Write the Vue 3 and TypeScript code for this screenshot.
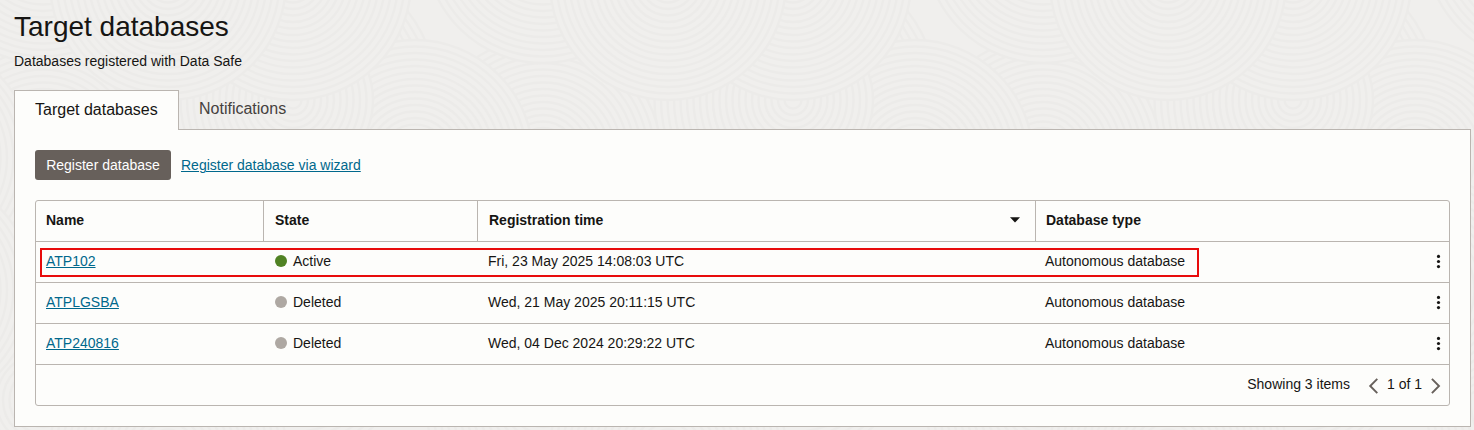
<script setup lang="ts">
interface Row { name: string; state: string; time: string; type: string }
interface Disc { x: number; y: number; r: number }

const rows: Row[] = [
  { name: 'ATP102', state: 'Active', time: 'Fri, 23 May 2025 14:08:03 UTC', type: 'Autonomous database' },
  { name: 'ATPLGSBA', state: 'Deleted', time: 'Wed, 21 May 2025 20:11:15 UTC', type: 'Autonomous database' },
  { name: 'ATP240816', state: 'Deleted', time: 'Wed, 04 Dec 2024 20:29:22 UTC', type: 'Autonomous database' },
]

// Overlapping ringed discs, painted back to front, repeating every 500px.
const base: Disc[] = [
  { x: 293, y: 100, r: 145 },
  { x: 43, y: 155, r: 118 },
  { x: -85, y: 158, r: 118 },
  { x: 293, y: 100, r: 80 },
  { x: 293, y: -18, r: 118 },
  { x: 43, y: -55, r: 118 },
  { x: 168, y: -18, r: 118 },
  { x: 43, y: 400, r: 118 },
  { x: 293, y: 340, r: 118 },
  { x: -85, y: 290, r: 118 },
  { x: 168, y: 450, r: 118 },
]
const discs: Disc[] = base.flatMap(d => [0, 500, 1000, 1500].map(s => ({ ...d, x: d.x + s })))
const radii = (r: number): number[] => {
  const out: number[] = []
  for (let v = r; v > 2; v -= 6.5) out.push(v)
  return out
}
</script>

<template>
  <div class="page">
    <svg class="texture" width="1474" height="430" aria-hidden="true">
      <g v-for="(d, i) in discs" :key="i">
        <circle :cx="d.x" :cy="d.y" :r="d.r" fill="#f0efed" />
        <circle v-for="r in radii(d.r)" :key="r" :cx="d.x" :cy="d.y" :r="r" fill="none" stroke="#ecebe9" stroke-width="2.4" />
      </g>
    </svg>
    <main class="content">
      <h1>Target databases</h1>
      <p class="subtitle">Databases registered with Data Safe</p>
      <nav class="tabs">
        <a class="tab active">Target databases</a>
        <a class="tab">Notifications</a>
      </nav>
      <section class="panel">
        <div class="actions">
          <button type="button">Register database</button>
          <a class="link">Register database via wizard</a>
        </div>
        <div class="table">
          <div class="row head">
            <div class="cell">Name</div>
            <div class="cell">State</div>
            <div class="cell sorted">Registration time
              <svg width="10" height="6" viewBox="0 0 10 6"><path d="M0 .3h10L5 5.5z" fill="#161513" /></svg>
            </div>
            <div class="cell">Database type</div>
          </div>
          <div v-for="(row, i) in rows" :key="row.name" class="row">
            <div class="cell"><a class="link">{{ row.name }}</a></div>
            <div class="cell"><i class="dot" :class="{ on: row.state === 'Active' }"></i>{{ row.state }}</div>
            <div class="cell">{{ row.time }}</div>
            <div class="cell last">{{ row.type }}
              <svg width="5" height="15" viewBox="0 0 5 15" fill="#161513"><circle cx="2.5" cy="2.4" r="1.6" /><circle cx="2.5" cy="7.5" r="1.6" /><circle cx="2.5" cy="12.6" r="1.6" /></svg>
            </div>
            <span v-if="i === 0" class="highlight"></span>
          </div>
          <div class="footer">
            <span class="count">Showing 3 items</span>
            <svg class="chev" width="10" height="16" viewBox="0 0 10 16"><path d="M9.3 .8 2.2 8 9.3 15.2" /></svg>
            <span class="pages">1 of 1</span>
            <svg class="chev" width="10" height="16" viewBox="0 0 10 16"><path d="M.9 .8 8 8 .9 15.2" /></svg>
          </div>
        </div>
      </section>
    </main>
  </div>
</template>

<style>
body { margin: 0; background: #f0efed; }
</style>
<style scoped>
.page { position: relative; width: 1474px; height: 430px; overflow: hidden; background: #f0efed; color: #161513; font: 14px/20px "Liberation Sans", Arial, sans-serif; }
.texture { position: absolute; inset: 0; }
.content { position: relative; padding: 9px 3px 0 14px; }
h1 { margin: 0; font-size: 28px; line-height: 36px; font-weight: 400; }
.subtitle { margin: 6px 0 0; }
.tabs { display: flex; height: 39px; margin-top: 19px; }
.tab { box-sizing: border-box; height: 38px; padding: 9px 20px 0; font-size: 16px; line-height: 20px; color: #45413e; }
.tab.active { position: relative; z-index: 1; width: 165px; height: 40px; border: 1px solid #bab5b0; border-bottom: 0; background: #fdfdfb; color: #161513; white-space: nowrap; }
.panel { box-sizing: border-box; height: 298px; padding: 20px; border: 1px solid #bab5b0; background: #fdfdfb; }
.actions { display: flex; align-items: center; gap: 10px; height: 30px; }
button { box-sizing: border-box; width: 136px; height: 30px; padding: 0; border: 0; border-radius: 3px; background: #67605b; color: #fff; font: inherit; white-space: nowrap; }
.link { color: #00688c; text-decoration: underline; text-decoration-thickness: 1px; text-underline-offset: 1px; }
.table { box-sizing: border-box; height: 206px; margin-top: 20px; border: 1px solid #bab5b0; border-radius: 3px; }
.row { position: relative; display: grid; grid-template-columns: 228px 214px 558px 1fr; box-sizing: border-box; height: 41px; border-bottom: 1px solid #bab5b0; }
.cell { display: flex; align-items: center; box-sizing: border-box; padding: 0 10px 2px; white-space: nowrap; }
.head { font-weight: 700; }
.head .cell { border-right: 1px solid #bab5b0; }
.head .cell + .cell { padding-left: 11px; }
.head .cell:last-child { padding-left: 10px; border-right: 0; }
.head .sorted { justify-content: space-between; padding-right: 15px; }
.row .last { justify-content: space-between; padding-left: 9px; padding-right: 8px; }
.last svg { position: relative; top: .5px; }
.dot { width: 12px; height: 12px; margin: 0 6px 0 1px; border-radius: 50%; background: #aea8a2; }
.dot.on { background: #508223; }
.highlight { position: absolute; left: 4px; top: 6px; box-sizing: border-box; width: 1159px; height: 29px; border: 2px solid #e80b0b; }
.footer { display: flex; align-items: center; justify-content: flex-end; height: 40px; padding-right: 8px; }
.count { margin-right: 18px; }
.pages { margin: 0 9px; }
.count, .pages { padding-bottom: 2px; }
.chev { fill: none; stroke: #67605b; stroke-width: 1.9; margin-top: 1px; }
</style>
